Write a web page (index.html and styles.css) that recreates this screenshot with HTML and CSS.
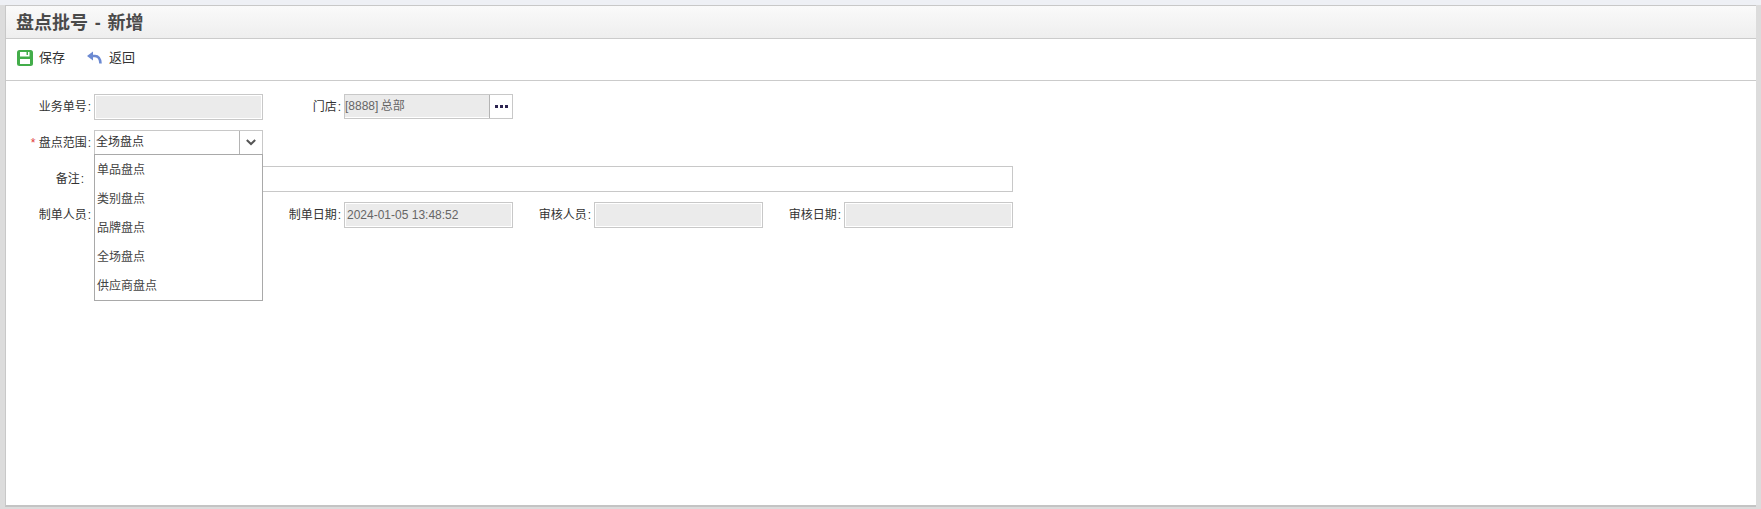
FILE: index.html
```html
<!DOCTYPE html>
<html lang="zh">
<head>
<meta charset="utf-8">
<title>盘点批号 - 新增</title>
<link rel="stylesheet" href="styles.css">
</head>
<body>
<div class="frame">
  <main class="panel">
    <header class="title-bar"><h1 class="title">盘点批号 - 新增</h1></header>
    <nav class="toolbar">
      <button class="tool tool-save" type="button">
        <svg class="icon" width="16" height="16" viewBox="0 0 16 16" aria-hidden="true">
          <rect width="16" height="16" rx="2.500" fill="#43ad4a"/>
          <path fill="#fff" d="M3 2h9.500v4.500H3zM3 9h10v5H3z"/>
          <path fill="#43ad4a" d="M9.500 2h1.500v3H9.500z"/>
        </svg>
        <span>保存</span>
      </button>
      <button class="tool tool-back" type="button">
        <svg class="icon" width="15" height="13" viewBox="0 0 15 13" aria-hidden="true">
          <path fill="#6c8ad2" d="M0 5 6 .5v9z"/>
          <path fill="none" stroke="#6c8ad2" stroke-width="2.600" d="M5 5h3c3.500 0 5.200 2.500 5.500 7.500"/>
        </svg>
        <span>返回</span>
      </button>
    </nav>
    <form class="form">
      <label class="label">业务单号&#8202;:</label>
      <div class="input readonly"></div>
      <label class="label">门店&#8202;:</label>
      <div class="combo short readonly-combo">
        <div class="combo-value">[8888] 总部</div>
        <button class="combo-btn" type="button">
          <svg width="13" height="3" viewBox="0 0 13 3" aria-hidden="true"><path fill="#2c2450" d="M0 0h3v3H0zM5 0h3v3H5zM10 0h3v3h-3z"/></svg>
        </button>
      </div>
      <span class="blank wide"></span>

      <label class="label"><span class="req">*</span> 盘点范围&#8202;:</label>
      <div class="select-wrap">
        <div class="combo short">
          <div class="combo-value plain">全场盘点</div>
          <button class="combo-btn chevron-btn" type="button">
            <svg width="10" height="7" viewBox="0 0 10 7" aria-hidden="true"><path fill="none" stroke="#555" stroke-width="2" d="M.8 1 5 5l4.200-4"/></svg>
          </button>
        </div>
        <ul class="menu">
          <li class="menu-item">单品盘点</li>
          <li class="menu-item">类别盘点</li>
          <li class="menu-item">品牌盘点</li>
          <li class="menu-item">全场盘点</li>
          <li class="menu-item">供应商盘点</li>
        </ul>
      </div>
      <span class="blank full"></span>

      <label class="label label-note">备注&#8202;:</label>
      <div class="input note"></div>

      <label class="label">制单人员&#8202;:</label>
      <div class="input readonly"></div>
      <label class="label">制单日期&#8202;:</label>
      <div class="input readonly">2024-01-05 13:48:52</div>
      <label class="label">审核人员&#8202;:</label>
      <div class="input readonly"></div>
      <label class="label">审核日期&#8202;:</label>
      <div class="input readonly"></div>
    </form>
  </main>
</div>
</body>
</html>
```

FILE: styles.css
```css
* { box-sizing: border-box; }
html, body { margin: 0; height: 100%; }
body {
  background: #eef0f5;
  padding-top: 5px;
  font-family: "Liberation Sans", "Noto Sans CJK SC", sans-serif;
  font-size: 12px;
  color: #333;
  overflow: hidden;
}
.frame {
  height: 504px;
  padding: 0 5px 2px;
  background: #dcdcdc;
}
.panel {
  height: 100%;
  border: 1px solid #c8c8c8;
  border-right: 0;
  border-bottom: 2px solid #c4c4c4;
  background: #fff;
}
.title-bar {
  height: 33px;
  border-bottom: 1px solid #cbcbcb;
  background: linear-gradient(#fafafa, #eeeeee);
  padding: 2px 0 0 10px;
  display: flex;
  align-items: center;
}
.title {
  margin: 0;
  font-size: 18px;
  font-weight: bold;
  color: #4a4a4a;
  line-height: 30px;
  word-spacing: 1.800px;
}
.toolbar {
  height: 42px;
  border-bottom: 1px solid #cbcbcb;
  padding: 0 0 4px 11px;
  display: flex;
  align-items: center;
  gap: 22px;
}
.tool {
  display: flex;
  align-items: center;
  padding: 0;
  border: 0;
  background: none;
  font: inherit;
  font-size: 13px;
  line-height: 16px;
  color: #333;
}
.tool-save { gap: 6px; }
.tool-back { gap: 7px; }
.form {
  display: grid;
  grid-template-columns: repeat(4, 81px 169px);
  grid-auto-rows: 26px;
  row-gap: 10px;
  padding: 13px 0 0 7px;
}
.label {
  text-align: right;
  padding-right: 3px;
  line-height: 26px;
  white-space: nowrap;
}
.label-note { padding-right: 10px; }
.req { color: #e03a3a; }
.input {
  height: 26px;
  border: 1px solid #c8c8c8;
  line-height: 25px;
  padding-left: 2px;
  color: #666;
  background: #fff;
}
.readonly {
  background: #ebebeb;
  box-shadow: inset 0 0 0 1px #fff;
}
.note { grid-column: span 7; }
.combo {
  display: flex;
  height: 25px;
  border: 1px solid #c8c8c8;
  background: #fff;
}
.combo-value {
  flex: 1;
  line-height: 23px;
  color: #666;
  word-spacing: -1px;
}
.readonly-combo .combo-value {
  background: #ebebeb;
  border-bottom: 1px solid #fff;
}
.combo-value.plain { color: #333; line-height: 22px; padding-left: 1px; }
.combo-btn {
  width: 23px;
  padding: 0;
  border: 0;
  border-left: 1px solid #b4b4b4;
  background: #fff;
  display: flex;
  align-items: center;
  justify-content: center;
}
.chevron-btn { padding-right: 1px; }
.blank.wide { grid-column: span 4; }
.blank.full { grid-column: span 6; }
.select-wrap { position: relative; }
.menu {
  position: absolute;
  z-index: 2;
  top: 24px;
  left: 0;
  width: 169px;
  margin: 0;
  padding: 0;
  list-style: none;
  background: #fff;
  border: 1px solid #a9a9a9;
}
.menu-item {
  height: 29px;
  padding: 2px 0 0 2px;
  line-height: 27px;
  color: #444;
}
```
